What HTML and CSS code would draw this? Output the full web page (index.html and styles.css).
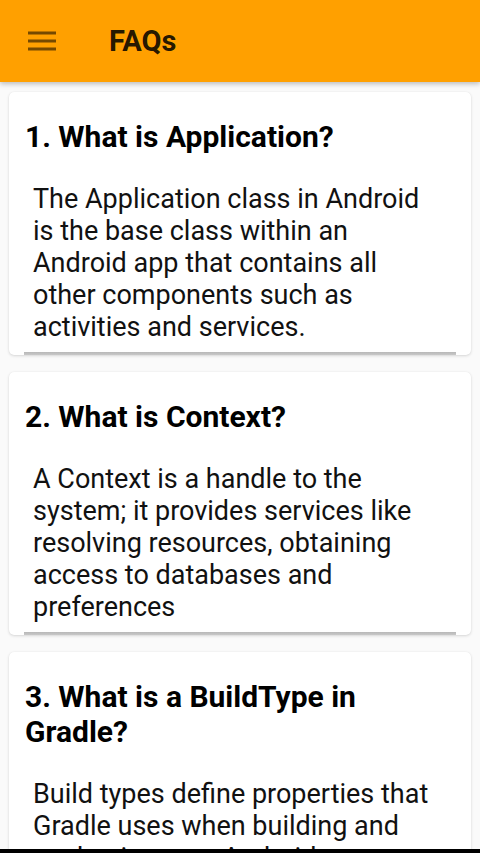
FILE: index.html
```html
<!DOCTYPE html>
<html>
<head>
<meta charset="utf-8">
<link rel="stylesheet" href="styles.css">
</head>
<body>
<header class="appbar">
  <svg class="menu" width="28" height="20" viewBox="0 0 28 20">
    <rect x="0" y="0.5" width="28" height="3" fill="rgba(0,0,0,0.54)"/>
    <rect x="0" y="8.5" width="28" height="3" fill="rgba(0,0,0,0.54)"/>
    <rect x="0" y="16.5" width="28" height="3" fill="rgba(0,0,0,0.54)"/>
  </svg>
  <h1 class="title">FAQs</h1>
</header>
<main class="list">
  <section class="card">
    <h2 class="q">1. What is Application?</h2>
    <div class="answer">
      <p class="a">The Application class in Android is the base class within an Android app that contains all other components such as activities and services.</p>
      <div class="rule"></div>
    </div>
  </section>
  <section class="card">
    <h2 class="q">2. What is Context?</h2>
    <div class="answer">
      <p class="a">A Context is a handle to the system; it provides services like resolving resources, obtaining access to databases and preferences</p>
      <div class="rule"></div>
    </div>
  </section>
  <section class="card">
    <h2 class="q">3. What is a BuildType in Gradle?</h2>
    <div class="answer">
      <p class="a">Build types define properties that Gradle uses when building and packaging your Android app.</p>
      <div class="rule"></div>
    </div>
  </section>
</main>
<div class="navstrip"></div>
</body>
</html>
```
FILE: styles.css
```css
* { box-sizing: border-box; }
html, body { margin: 0; padding: 0; }
body {
  background: #fafafa;
  font-family: Roboto, "Liberation Sans", sans-serif;
  width: 480px;
  height: 853px;
  overflow: hidden;
}
.appbar {
  height: 82px;
  background: #ffa000;
  display: flex;
  align-items: center;
  padding-left: 28px;
  box-shadow: 0 2px 5px rgba(0,0,0,0.25);
  position: relative;
  z-index: 1;
}
.menu { display: block; }
.title {
  margin: 0 0 0 53px;
  font-size: 29px;
  font-weight: bold;
  color: rgba(0,0,0,0.87);
}
.list {
  padding: 10px 9px 0;
  display: flex;
  flex-direction: column;
  gap: 17px;
}
.card {
  background: #fff;
  border-radius: 5px;
  box-shadow: 0 1px 3px rgba(0,0,0,0.14), 0 0 1px rgba(0,0,0,0.08);
  padding: 0 15px 0 16px;
}
.q {
  margin: 0;
  padding-top: 27px;
  font-size: 30px;
  line-height: 35px;
  font-weight: bold;
  color: #000;
}
.answer {
  margin: 29px 0 0 -1px;
}
.a {
  margin: 0;
  padding: 0 16px 0 9px;
  font-size: 27px;
  line-height: 32px;
  color: #111;
}
.rule {
  height: 3px;
  margin-top: 9px;
  background: linear-gradient(#b8b8b8, #c8c8c8);
}
.navstrip {
  position: fixed;
  left: 0;
  right: 0;
  bottom: 0;
  height: 4px;
  background: #000;
}
```
